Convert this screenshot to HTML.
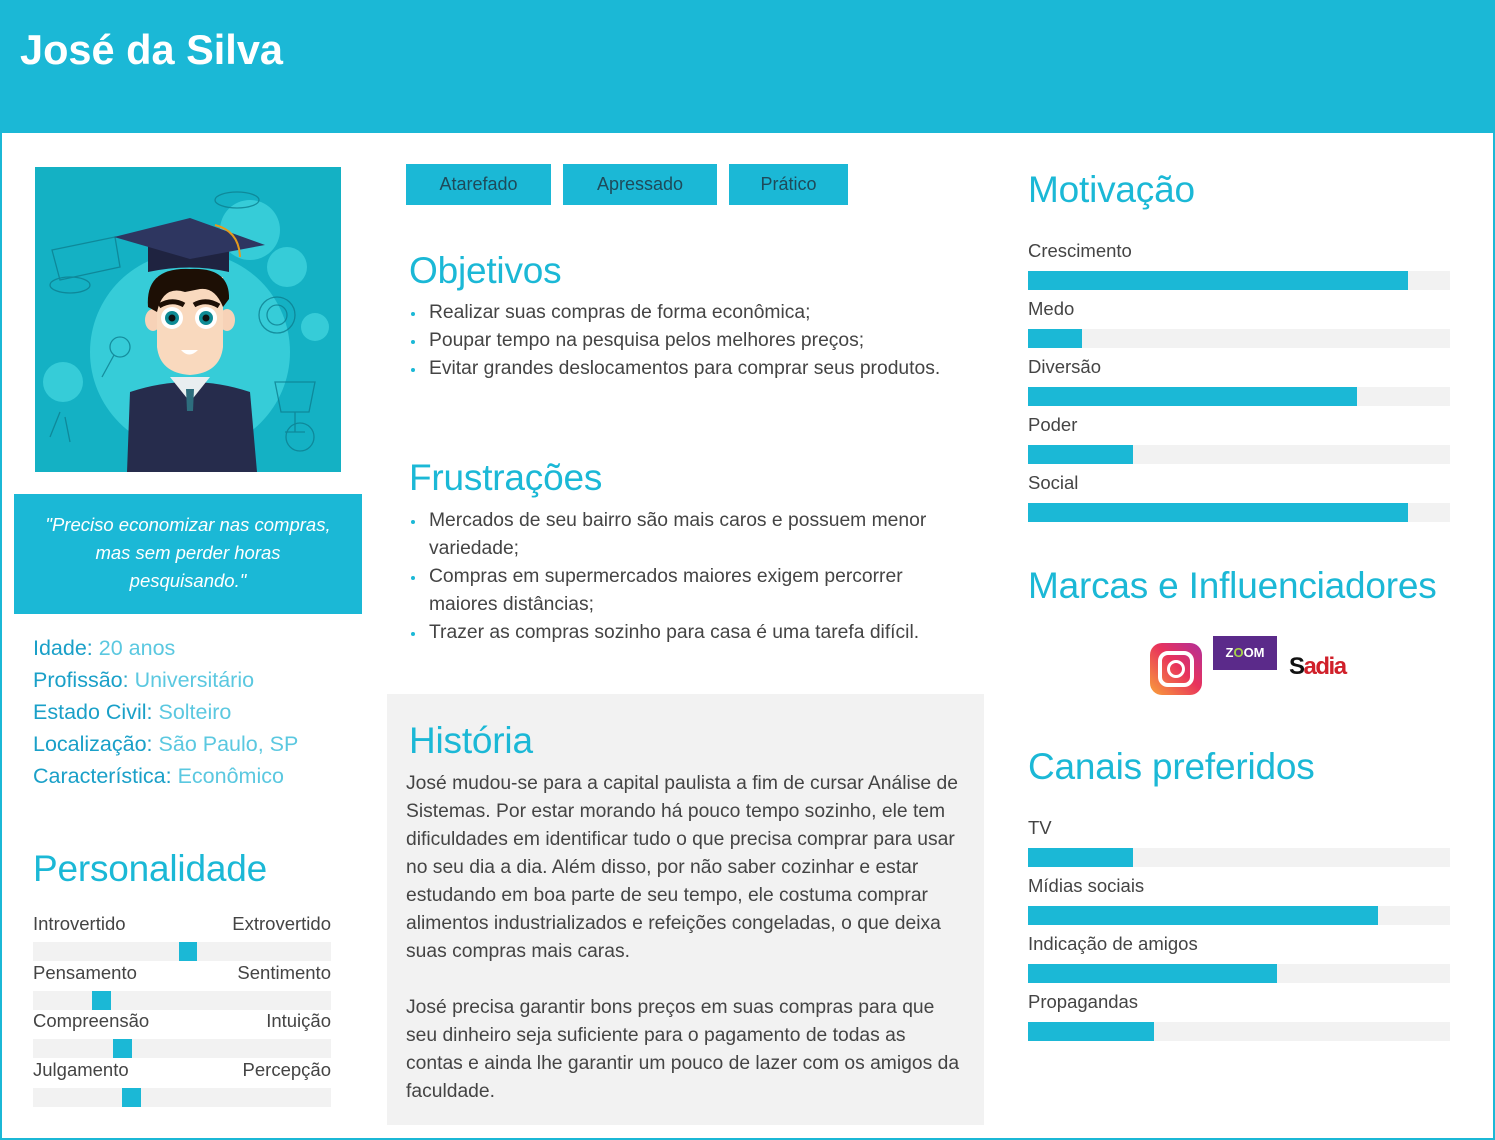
<!DOCTYPE html>
<html><head><meta charset="utf-8"><style>
*{margin:0;padding:0;box-sizing:border-box}
body{width:1495px;height:1140px;position:relative;background:#fff;font-family:"Liberation Sans",sans-serif;color:#3a3a4a;overflow:hidden}
.a{position:absolute;white-space:nowrap}
.hd{position:absolute;left:0;top:0;width:1495px;height:133px;background:#1bb8d6}
.frame{position:absolute;left:0;top:133px;width:1495px;height:1007px;border:2px solid #1bb8d6;border-top:none}
h1{position:absolute;left:20px;top:26px;font-size:41.5px;color:#fff;font-weight:bold}
.h{position:absolute;font-size:37px;color:#1bb8d6;font-weight:normal;letter-spacing:-0.2px}
.tag{position:absolute;top:164px;height:41px;background:#1bb8d6;color:#1e4a5a;font-size:18px;text-align:center;line-height:40px}
.t{font-size:19.3px;line-height:28px;color:#444}
ul{list-style:none}
ul li{position:relative;padding-left:20px}
ul li:before{content:"";position:absolute;left:2px;top:13px;width:4px;height:4px;border-radius:50%;background:#1bb8d6}
.bar{position:absolute;height:19px;background:#f2f2f2}
.bar i{position:absolute;top:0;left:0;height:100%;background:#1bb8d6}
.lb{position:absolute;font-size:18.5px;color:#444}
.info{position:absolute;left:33px;font-size:21.5px;color:#2aa8cc}
.info b{font-weight:normal;color:#1aa0c8}
.info span{color:#5bc8e0}
</style></head><body>
<div class="hd"></div><div class="frame"></div>
<h1>José da Silva</h1>

<svg class="a" style="left:35px;top:167px" width="306" height="305" viewBox="0 0 306 305">
<rect width="306" height="305" fill="#14b1c4"/>
<circle cx="155" cy="185" r="100" fill="#36ccd8"/>
<circle cx="215" cy="63" r="30" fill="#36ccd8"/>
<circle cx="252" cy="100" r="20" fill="#36ccd8"/>
<circle cx="28" cy="215" r="20" fill="#36ccd8"/>
<circle cx="280" cy="160" r="14" fill="#36ccd8"/>
<g fill="none" stroke="#0d7f90" stroke-width="1.3" opacity=".8">
<path d="M17 83 L80 70 L85 100 L25 113 Z"/><ellipse cx="202" cy="33" rx="22" ry="8"/><ellipse cx="35" cy="118" rx="20" ry="8"/>
<circle cx="85" cy="180" r="10"/><path d="M79 188 L67 210"/><circle cx="242" cy="148" r="18"/><circle cx="242" cy="148" r="10"/>
<path d="M240 215 h40 l-6 30 h-28 Z M260 245 v20 M250 265 h20"/><circle cx="265" cy="270" r="14"/>
<path d="M15 270 l10 -25 M35 275 l-5 -25"/>
</g>
<path d="M95 225 Q155 205 215 225 L222 305 H92 Z" fill="#262c4c"/>
<path d="M135 210 L155 235 L175 210 Z" fill="#e8eef0"/><path d="M151 222 h8 l-1 22 h-6Z" fill="#2d6d7d"/>
<ellipse cx="118" cy="153" rx="8" ry="11" fill="#f7d2b7"/><ellipse cx="192" cy="153" rx="8" ry="11" fill="#f7d2b7"/>
<path d="M122 110 L188 110 L188 180 Q185 206 155 208 Q125 206 122 180 Z" fill="#f9d9be"/>
<path d="M113 140 Q110 100 155 102 Q195 100 194 132 L188 140 Q180 120 165 122 L150 125 Q128 118 122 145 Z" fill="#1d0f05"/>
<path d="M113 73 h81 v32 Q155 96 113 105 Z" fill="#1f2340"/><path d="M79 70 L155 51 L230 78 L155 92 Z" fill="#2e3660"/>
<path d="M180 58 Q204 64 205 90" stroke="#e39a1e" stroke-width="2" fill="none"/>
<circle cx="137" cy="151" r="11" fill="#fff"/><circle cx="171" cy="151" r="11" fill="#fff"/>
<circle cx="137" cy="151" r="7" fill="#0f8b95"/><circle cx="171" cy="151" r="7" fill="#0f8b95"/>
<circle cx="137" cy="151" r="3.5" fill="#111"/><circle cx="171" cy="151" r="3.5" fill="#111"/>
<path d="M124 139 Q137 131 149 138 M159 138 Q171 131 184 139" stroke="#1d0f05" stroke-width="5" fill="none"/>
<path d="M146 183 Q154 192 163 183 Z" fill="#fff"/>
</svg>

<div class="a" style="left:14px;top:494px;width:348px;height:120px;background:#1bb8d6"></div>
<div class="a" style="left:14px;top:511px;width:348px;text-align:center;color:#fff;font-style:italic;font-size:18.5px;line-height:28px;white-space:normal">"Preciso economizar nas compras,<br>mas sem perder horas<br>pesquisando."</div>

<div class="info" style="top:636px"><b>Idade:</b> <span>20 anos</span></div>
<div class="info" style="top:668px"><b>Profissão</b>: <span>Universitário</span></div>
<div class="info" style="top:700px"><b>Estado Civil:</b> <span>Solteiro</span></div>
<div class="info" style="top:732px"><b>Localização:</b> <span>São Paulo, SP</span></div>
<div class="info" style="top:764px"><b>Característica:</b> <span>Econômico</span></div>

<div class="h" style="left:33px;top:848px">Personalidade</div>
<div class="lb" style="left:33px;top:913px">Introvertido</div><div class="lb" style="right:1164px;top:913px">Extrovertido</div>
<div class="bar" style="left:33px;top:942px;width:298px"><i style="left:146px;width:18px"></i></div>
<div class="lb" style="left:33px;top:962px">Pensamento</div><div class="lb" style="right:1164px;top:962px">Sentimento</div>
<div class="bar" style="left:33px;top:991px;width:298px"><i style="left:59px;width:19px"></i></div>
<div class="lb" style="left:33px;top:1010px">Compreensão</div><div class="lb" style="right:1164px;top:1010px">Intuição</div>
<div class="bar" style="left:33px;top:1039px;width:298px"><i style="left:80px;width:19px"></i></div>
<div class="lb" style="left:33px;top:1059px">Julgamento</div><div class="lb" style="right:1164px;top:1059px">Percepção</div>
<div class="bar" style="left:33px;top:1088px;width:298px"><i style="left:89px;width:19px"></i></div>

<div class="tag" style="left:406px;width:145px">Atarefado</div>
<div class="tag" style="left:563px;width:154px">Apressado</div>
<div class="tag" style="left:729px;width:119px">Prático</div>

<div class="h" style="left:409px;top:250px">Objetivos</div>
<ul class="a t" style="left:409px;top:299px">
<li>Realizar suas compras de forma econômica;</li>
<li>Poupar tempo na pesquisa pelos melhores preços;</li>
<li>Evitar grandes deslocamentos para comprar seus produtos.</li></ul>

<div class="h" style="left:409px;top:457px">Frustrações</div>
<ul class="a t" style="left:409px;top:507px">
<li>Mercados de seu bairro são mais caros e possuem menor<br>variedade;</li>
<li>Compras em supermercados maiores exigem percorrer<br>maiores distâncias;</li>
<li>Trazer as compras sozinho para casa é uma tarefa difícil.</li></ul>

<div class="a" style="left:387px;top:694px;width:597px;height:431px;background:#f2f2f2"></div>
<div class="h" style="left:409px;top:720px">História</div>
<div class="a t" style="left:406px;top:770px">José mudou-se para a capital paulista a fim de cursar Análise de<br>Sistemas. Por estar morando há pouco tempo sozinho, ele tem<br>dificuldades em identificar tudo o que precisa comprar para usar<br>no seu dia a dia. Além disso, por não saber cozinhar e estar<br>estudando em boa parte de seu tempo, ele costuma comprar<br>alimentos industrializados e refeições congeladas, o que deixa<br>suas compras mais caras.<br><br>José precisa garantir bons preços em suas compras para que<br>seu dinheiro seja suficiente para o pagamento de todas as<br>contas e ainda lhe garantir um pouco de lazer com os amigos da<br>faculdade.</div>

<div class="h" style="left:1028px;top:169px">Motivação</div>
<div class="lb" style="left:1028px;top:240px">Crescimento</div><div class="bar" style="left:1028px;top:271px;width:422px"><i style="width:380px"></i></div>
<div class="lb" style="left:1028px;top:298px">Medo</div><div class="bar" style="left:1028px;top:329px;width:422px"><i style="width:54px"></i></div>
<div class="lb" style="left:1028px;top:356px">Diversão</div><div class="bar" style="left:1028px;top:387px;width:422px"><i style="width:329px"></i></div>
<div class="lb" style="left:1028px;top:414px">Poder</div><div class="bar" style="left:1028px;top:445px;width:422px"><i style="width:105px"></i></div>
<div class="lb" style="left:1028px;top:472px">Social</div><div class="bar" style="left:1028px;top:503px;width:422px"><i style="width:380px"></i></div>

<div class="h" style="left:1028px;top:565px">Marcas e Influenciadores</div>
<div class="a" style="left:1150px;top:643px;width:52px;height:52px;border-radius:12px;background:linear-gradient(45deg,#f9a03a,#e8325c 55%,#b22f9a)"></div>
<div class="a" style="left:1158px;top:651px;width:36px;height:36px;border:4px solid #fff;border-radius:10px"></div>
<div class="a" style="left:1167px;top:660px;width:18px;height:18px;border:3.5px solid #fff;border-radius:50%"></div>
<div class="a" style="left:1213px;top:636px;width:64px;height:34px;background:#5b2a8a;color:#fff;font-weight:bold;font-size:13px;text-align:center;line-height:34px">Z<span style="color:#a6d14a">O</span>OM</div>
<div class="a" style="left:1289px;top:653px;font-size:24px;font-weight:bold;color:#d0202a;letter-spacing:-1.5px"><span style="color:#111">S</span>adia</div>

<div class="h" style="left:1028px;top:746px">Canais preferidos</div>
<div class="lb" style="left:1028px;top:817px">TV</div><div class="bar" style="left:1028px;top:848px;width:422px"><i style="width:105px"></i></div>
<div class="lb" style="left:1028px;top:875px">Mídias sociais</div><div class="bar" style="left:1028px;top:906px;width:422px"><i style="width:350px"></i></div>
<div class="lb" style="left:1028px;top:933px">Indicação de amigos</div><div class="bar" style="left:1028px;top:964px;width:422px"><i style="width:249px"></i></div>
<div class="lb" style="left:1028px;top:991px">Propagandas</div><div class="bar" style="left:1028px;top:1022px;width:422px"><i style="width:126px"></i></div>
</body></html>
